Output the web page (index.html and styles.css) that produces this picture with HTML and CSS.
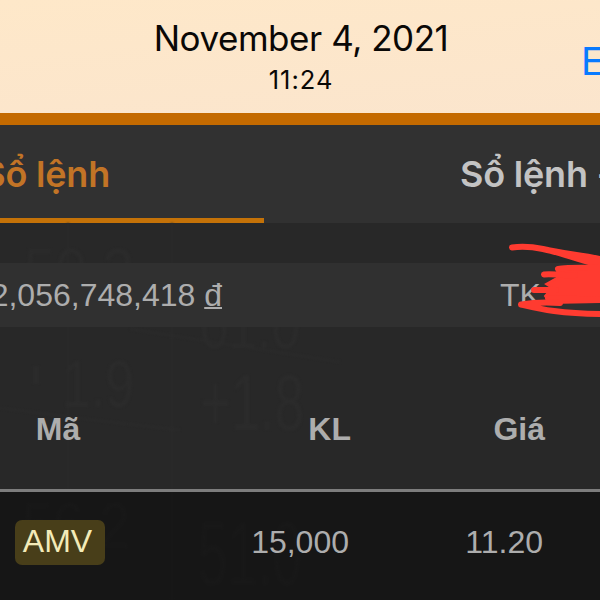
FILE: index.html
```html
<!DOCTYPE html>
<html lang="vi">
<head>
    <meta charset="UTF-8">
    <meta name="viewport" content="width=device-width, initial-scale=1.0">
    <title>Sổ lệnh</title>
    <link rel="stylesheet" href="styles.css">
</head>
<body>

    <header class="photo-bar">
        <div class="photo-date">
            <h1>November 4, 2021</h1>
            <p>11:24</p>
        </div>
        <a class="edit">E</a>
    </header>

    <nav class="tabs">
        <div class="tab active"><span>Sổ lệnh</span></div>
        <div class="tab"><span>Sổ lệnh -</span></div>
    </nav>

    <main class="board">
        <svg class="board-bg" width="600" height="377" viewBox="0 223 600 377">
            <path d="M68 223V490M172 223V600M0 408L110 422L180 430M130 329L340 362" />
            <text x="24" y="294" font-size="64" textLength="110" lengthAdjust="spacingAndGlyphs">50.3</text>
            <path class="tick" d="M36 366V384" />
            <text x="62" y="407" font-size="66" textLength="72" lengthAdjust="spacingAndGlyphs">1.9</text>
            <text x="200" y="348" font-size="60" textLength="100" lengthAdjust="spacingAndGlyphs">01.0</text>
            <text x="200" y="430" font-size="80" textLength="104" lengthAdjust="spacingAndGlyphs">+1.8</text>
            <text x="22" y="548" font-size="64" textLength="108" lengthAdjust="spacingAndGlyphs">56.2</text>
            <text x="198" y="585" font-size="90" textLength="104" lengthAdjust="spacingAndGlyphs">51.0</text>
        </svg>

        <section class="account">
            <span class="balance">2,056,748,418 <u>đ</u></span>
            <span class="account-no">TK</span>
            <svg class="scribble" width="100" height="90" viewBox="500 235 100 90">
                <path class="fill" d="M559 268L604 268V302L550 303L545 296L552 288L546 284L557 278Z" />
                <path d="M512 247.500C524 246 533 247 543 249C563 254 585 255 604 260M543 249C560 252 580 261 604 266" />
                <path d="M558 269Q562 267 604 268M544 274.500C552 273 560 276 575 275M534 290H556M548 298L604 300" />
                <path d="M521 304.500C530 303 546 302 560 303M521 304.500C540 309 560 314 604 314" />
            </svg>
        </section>

        <section class="orders">
            <div class="row head">
                <span>Mã</span>
                <span>KL</span>
                <span>Giá</span>
            </div>
            <div class="row">
                <span><b class="stock">AMV</b></span>
                <span>15,000</span>
                <span>11.20</span>
            </div>
        </section>
    </main>

</body>
</html>
```

FILE: styles.css
```css
* {
    box-sizing: border-box;
}

body {
    margin: 0;
    width: 600px;
    height: 600px;
    overflow: hidden;
    background: #282828;
    color: #adadad;
    font-family: 'Liberation Sans', Arial, sans-serif;
    font-size: 32px;
}

.photo-bar {
    display: grid;
    grid-template-columns: 584px 16px;
    height: 125px;
    background: linear-gradient(175deg, #fee8c9, #fbe5cd);
    border-bottom: 12px solid #c46a00;
    color: #0a0806;
    font-family: Inter, sans-serif;
}

.photo-date {
    padding: 17px 0 0 18px;
    text-align: center;
}

.photo-date h1 {
    margin: 0;
    font-size: 35px;
    font-weight: 400;
    letter-spacing: -0.45px;
    line-height: 42px;
}

.photo-date p {
    margin: 6px 0 0;
    font-size: 25.5px;
    letter-spacing: 1px;
    line-height: 30px;
}

.edit {
    padding-top: 38px;
    margin-left: -3px;
    color: #087aff;
    font-size: 38px;
    line-height: 46px;
}

.tabs {
    display: grid;
    grid-template-columns: 264px 336px;
    height: 98px;
    background: #313131;
    font-family: Inter, sans-serif;
    font-size: 36px;
    font-weight: 600;
    letter-spacing: -0.2px;
    line-height: 44px;
    white-space: nowrap;
}

.tab {
    padding: 27px 0 0 196px;
    color: #c3c3c3;
}

.tab.active {
    display: flex;
    justify-content: flex-end;
    padding: 27px 154px 0 0;
    color: #c27426;
    border-bottom: 5px solid #c47208;
}

.board {
    position: relative;
    height: 377px;
    padding-top: 40px;
}

/* faded price board behind the table */
.board-bg {
    position: absolute;
    top: 0;
    left: 0;
    fill: #2b2b2b;
    stroke: none;
    filter: blur(1px);
    font-family: 'Liberation Sans', Arial, sans-serif;
}

.board-bg path {
    fill: none;
    stroke: #2b2b2b;
    stroke-width: 2;
}

.board-bg .tick {
    stroke-width: 6;
}

.account {
    position: relative;
    display: grid;
    grid-template-columns: 222px 278px 100px;
    height: 64px;
    background: #303030;
    line-height: 64px;
    white-space: nowrap;
}

.balance {
    justify-self: end;
}

.balance u {
    text-decoration-thickness: 2px;
}

.account-no {
    grid-column: 3;
}

.scribble {
    position: absolute;
    top: -28px;
    left: 500px;
    fill: none;
    stroke: #ff3b30;
    stroke-width: 6;
    stroke-linecap: round;
}

.scribble .fill {
    fill: #ff3b30;
    stroke-width: 2;
}

.orders {
    position: relative;
}

.row {
    display: grid;
    grid-template-columns: 116px 233px 194px;
    align-items: center;
    height: 109px;
    padding-bottom: 9px;
    background: rgba(0, 0, 0, 0.43);
    text-align: right;
}

.row.head {
    grid-template-columns: 116px 235px 194px;
    height: 165px;
    padding: 42px 0 0;
    background: none;
    border-bottom: 3px solid #7d7d7d;
    font-weight: bold;
}

.row span:first-child {
    text-align: center;
}

.stock {
    display: inline-block;
    width: 90px;
    height: 45px;
    margin-left: 4px;
    padding-right: 5px;
    border-radius: 7px;
    background: #483e19;
    color: #f3ebb8;
    font-weight: normal;
    line-height: 43px;
}
```
